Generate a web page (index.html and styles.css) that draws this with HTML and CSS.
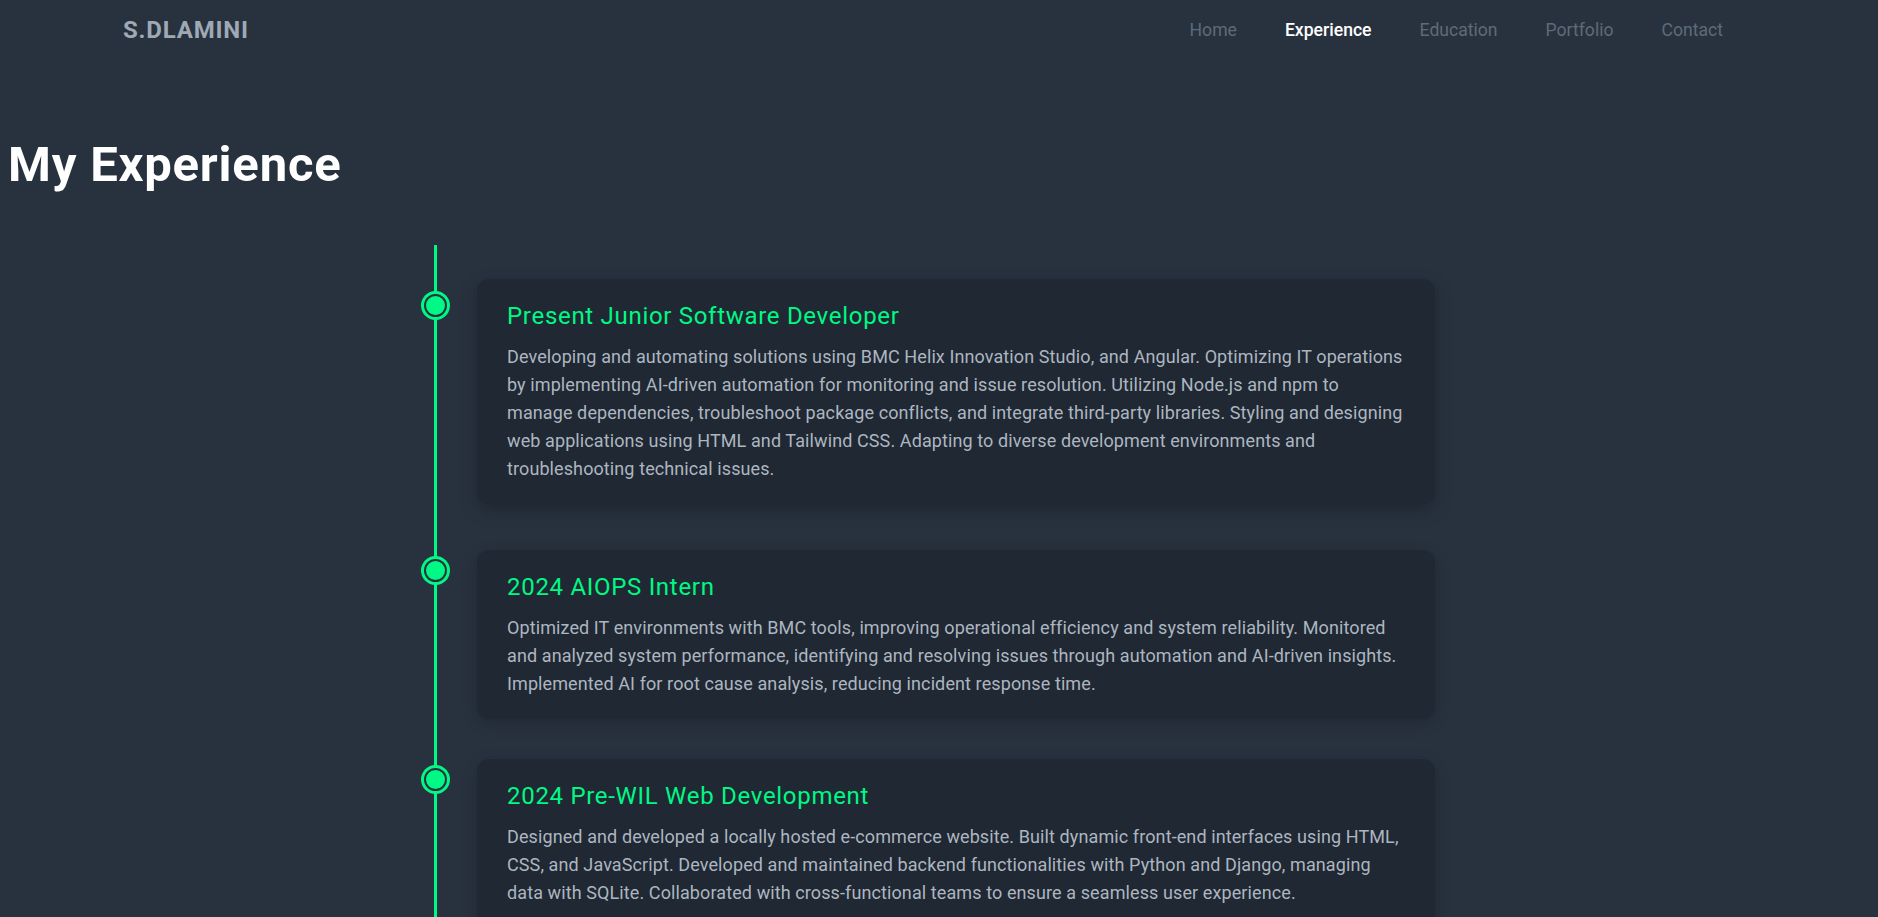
FILE: index.html
```html
<!DOCTYPE html>
<html lang="en">
<head>
<meta charset="utf-8">
<title>S.DLAMINI - Experience</title>
<link rel="stylesheet" href="styles.css">
</head>
<body>
<header class="site-header">
  <div class="logo">S.DLAMINI</div>
  <nav class="nav">
    <a class="nav-link" href="#">Home</a>
    <a class="nav-link active" href="#">Experience</a>
    <a class="nav-link" href="#">Education</a>
    <a class="nav-link" href="#">Portfolio</a>
    <a class="nav-link" href="#">Contact</a>
  </nav>
</header>
<main>
  <h1 class="page-title">My Experience</h1>
  <section class="timeline">
    <div class="timeline-item">
      <span class="timeline-dot"></span>
      <div class="timeline-card lifted">
        <h3 class="card-title">Present Junior Software Developer</h3>
        <p class="card-text">Developing and automating solutions using BMC Helix Innovation Studio, and Angular. Optimizing IT operations by implementing AI-driven automation for monitoring and issue resolution. Utilizing Node.js and npm to manage dependencies, troubleshoot package conflicts, and integrate third-party libraries. Styling and designing web applications using HTML and Tailwind CSS. Adapting to diverse development environments and troubleshooting technical issues.</p>
      </div>
    </div>
    <div class="timeline-item">
      <span class="timeline-dot"></span>
      <div class="timeline-card">
        <h3 class="card-title">2024 AIOPS Intern</h3>
        <p class="card-text">Optimized IT environments with BMC tools, improving operational efficiency and system reliability. Monitored and analyzed system performance, identifying and resolving issues through automation and AI-driven insights. Implemented AI for root cause analysis, reducing incident response time.</p>
      </div>
    </div>
    <div class="timeline-item">
      <span class="timeline-dot"></span>
      <div class="timeline-card">
        <h3 class="card-title">2024 Pre-WIL Web Development</h3>
        <p class="card-text">Designed and developed a locally hosted e-commerce website. Built dynamic front-end interfaces using HTML, CSS, and JavaScript. Developed and maintained backend functionalities with Python and Django, managing data with SQLite. Collaborated with cross-functional teams to ensure a seamless user experience.</p>
      </div>
    </div>
  </section>
</main>
</body>
</html>
```
FILE: styles.css
```css
* { box-sizing: border-box; }

html, body {
  margin: 0;
  padding: 0;
}

body {
  background: #28323f;
  font-family: Roboto, "Liberation Sans", Arial, sans-serif;
  color: #ffffff;
}

.site-header {
  display: flex;
  justify-content: space-between;
  align-items: center;
  padding: 16px 155px 0 123px;
}

.logo {
  font-size: 24px;
  line-height: 28px;
  font-weight: 700;
  letter-spacing: 0.8px;
  color: #9ea9b5;
}

.nav {
  display: flex;
  gap: 48px;
}

.nav-link {
  font-size: 17.6px;
  line-height: 28px;
  color: #5e6a78;
  text-decoration: none;
}

.nav-link.active {
  color: #ffffff;
  font-weight: 500;
}

.page-title {
  margin: 93px 0 0 8px;
  font-size: 49px;
  font-weight: 700;
  line-height: 56px;
  letter-spacing: 0.8px;
  color: #ffffff;
}

.timeline {
  position: relative;
  width: 1001px;
  margin: 52px 0 0 434px;
  padding-top: 40px;
}

.timeline::before {
  content: "";
  position: absolute;
  left: 0;
  top: 0;
  bottom: 0;
  width: 3px;
  background: #00f884;
}

.timeline-item {
  position: relative;
  padding-left: 43px;
  margin-bottom: 40px;
}

.timeline-dot {
  position: absolute;
  left: -10px;
  top: 9px;
  width: 23px;
  height: 23px;
  border-radius: 50%;
  background: #00f884;
  border: 2px solid #28323f;
  box-shadow: 0 0 0 3px #00f884;
}

.timeline-card {
  background: #1f2833;
  border-radius: 12px;
  padding: 23px 30px 21px;
  box-shadow: 0 4px 15px rgba(0, 0, 0, 0.2);
}

.timeline-card.lifted {
  transform: translateY(-6px);
  box-shadow: 0 6px 18px rgba(0, 0, 0, 0.25);
}

.card-title {
  margin: 0 0 13px;
  font-size: 24px;
  font-weight: 400;
  line-height: 28px;
  letter-spacing: 0.7px;
  color: #00f884;
}

.card-text {
  margin: 0;
  font-size: 18px;
  line-height: 28px;
  letter-spacing: 0.1px;
  color: #adb6c0;
}
```
